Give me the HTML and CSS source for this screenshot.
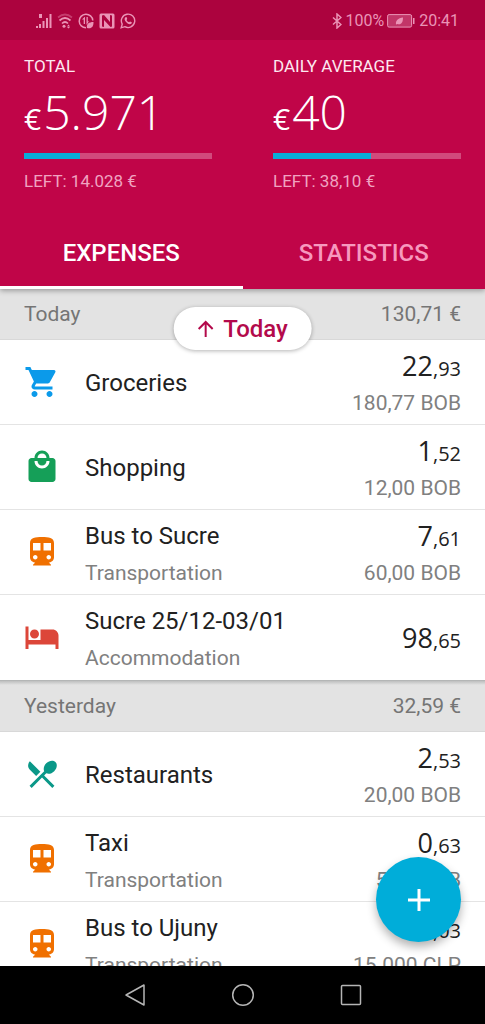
FILE: index.html
```html
<!DOCTYPE html>
<html lang="en">
<head>
<meta charset="utf-8">
<meta name="viewport" content="width=device-width, initial-scale=1">
<title>Expenses</title>
<link rel="stylesheet" href="styles.css">
</head>
<body>
<svg class="sprite" aria-hidden="true">
  <symbol id="cart" viewBox="0 0 24 24"><path d="M7 18c-1.1 0-1.99.9-1.99 2S5.9 22 7 22s2-.9 2-2-.9-2-2-2zM1 2v2h2l3.6 7.59-1.35 2.45c-.16.28-.25.61-.25.96 0 1.1.9 2 2 2h12v-2H7.42c-.14 0-.25-.11-.25-.25l.03-.12.9-1.63h7.45c.75 0 1.41-.41 1.75-1.03l3.58-6.49A1.003 1.003 0 0020 4H5.21l-.94-2H1zm16 16c-1.1 0-1.99.9-1.99 2s.89 2 1.99 2 2-.9 2-2-.9-2-2-2z"/></symbol>
  <symbol id="bag" viewBox="0 0 24 24"><path d="M19 6h-2c0-2.76-2.24-5-5-5S7 3.24 7 6H5c-1.1 0-1.99.9-1.99 2L3 20c0 1.1.9 2 2 2h14c1.1 0 2-.9 2-2V8c0-1.1-.9-2-2-2zm-7-3c1.66 0 3 1.34 3 3H9c0-1.66 1.34-3 3-3zm0 10c-2.76 0-5-2.24-5-5h2c0 1.66 1.34 3 3 3s3-1.34 3-3h2c0 2.76-2.24 5-5 5z"/></symbol>
  <symbol id="train" viewBox="0 0 24 24"><path d="M12 2c-4.42 0-8 .5-8 4v9.5C4 17.43 5.57 19 7.5 19L6 20.5v.5h12v-.5L16.5 19c1.93 0 3.5-1.57 3.5-3.5V6c0-3.5-3.58-4-8-4zM7.5 17c-.83 0-1.5-.67-1.5-1.5S6.67 14 7.5 14s1.5.67 1.5 1.5S8.33 17 7.5 17zm3.5-6H6V6h5v5zm5.500 6c-.83 0-1.5-.67-1.5-1.5s.67-1.5 1.5-1.5 1.5.67 1.5 1.5-.67 1.5-1.5 1.5zm1.5-6h-5V6h5v5z"/></symbol>
  <symbol id="bed" viewBox="0 0 24 24"><path d="M7 13c1.66 0 3-1.34 3-3S8.66 7 7 7s-3 1.34-3 3 1.34 3 3 3zm12-6h-8v7H3V5H1v15h2v-3h18v3h2v-9c0-2.21-1.79-4-4-4z"/></symbol>
  <symbol id="dining" viewBox="0 0 24 24"><path d="M8.1 13.34l2.83-2.83L3.91 3.5c-1.56 1.56-1.56 4.09 0 5.66l4.19 4.18zm6.78-1.81c1.53.71 3.68.21 5.27-1.38 1.91-1.91 2.28-4.65.81-6.12-1.46-1.46-4.2-1.1-6.12.81-1.59 1.59-2.09 3.74-1.38 5.27L3.7 19.87l1.41 1.41L12 14.41l6.88 6.88 1.41-1.41L13.41 13l1.47-1.47z"/></symbol>
</svg>

<header class="app-bar">
  <div class="status">
    <div class="status-icons">
      <svg viewBox="0 0 16 16"><path d="M0 13h2v2H0zM3 11h2v4H3zM6.500 8h2v7h-2zM10 5h2v10h-2zM13.500 1h2v14h-2zM3 1h3v4H3z"/></svg>
      <svg viewBox="0 0 16 16"><g fill="none" stroke="currentColor" stroke-width="1.700"><path d="M1 4.500q7-6 14 0" opacity=".4"/><path d="M2.500 7.500q5.500-5 11 0M5 10.500q3-3 6 0"/></g><circle cx="7" cy="13.300" r="1.500"/><path d="M11.500 11.500l1.500 2h-3zM11.500 15.500l1.500-1.500h-3z"/></svg>
      <svg viewBox="0 0 16 16"><path d="M14.800 7.500A6.800 6.800 0 1 0 8 14.800" fill="none" stroke="currentColor" stroke-width="1.500"/><path d="M4 6.500L6.500 4H7v7H5.700V6.500zM8.500 4h1.300v4.500L11 8l-2 3.500h-.5z"/><path d="M9 15c-1-4 2-6 6.500-6 0 5-2 7-6.500 6z"/></svg>
      <svg viewBox="0 0 16 16"><path fill-rule="evenodd" d="M2 .5h12a1.500 1.500 0 0 1 1.500 1.500v12a1.500 1.500 0 0 1-1.500 1.500H2A1.500 1.500 0 0 1 .5 14V2A1.500 1.500 0 0 1 2 .5zM3 2.500v11l2 .5V7l6.500 7 1.500-.5v-11L11 2v7L5 2z"/></svg>
      <svg viewBox="0 0 16 16"><path d="M1.200 14.800l1-3.700a6.700 6.700 0 1 1 2.600 2.600z" fill="none" stroke="currentColor" stroke-width="1.400"/><path d="M5.500 4.300c.6-.4 1-.2 1.200.2l.5 1.200c0 .5-.4.8-.7 1.200.6 1.100 1.400 1.900 2.600 2.400l.9-.9 1.800.9c.2 1.300-.9 2-2 2C7.500 11 4.600 8.200 4.600 6c0-.8.4-1.400.9-1.700z"/></svg>
    </div>
    <div class="status-info">
      <svg class="bluetooth" viewBox="0 0 10 16"><path d="M1 4.500l8 7-4 3.500V1l4 3.500-8 7" fill="none" stroke="currentColor" stroke-width="1.500"/></svg>
      <span>100%</span>
      <svg class="battery" viewBox="0 0 28 14"><rect x=".6" y=".6" width="24" height="12.500" rx="1.500" fill="currentColor" fill-opacity=".35" stroke="currentColor"/><path d="M26 4h1.500v6H26z"/><path d="M9 10.500c-.5-4 2-6.500 7-7 0 5.500-2 7.500-5.500 6.500z"/></svg>
      <time class="clock">20:41</time>
    </div>
  </div>

  <div class="stats">
    <section class="stat">
      <h2 class="stat-label" id="total">TOTAL</h2>
      <p class="stat-value"><span class="currency">€</span>5.971</p>
      <progress class="bar" value="30" max="100" aria-labelledby="total"></progress>
      <p class="stat-left">LEFT: 14.028 €</p>
    </section>
    <section class="stat">
      <h2 class="stat-label" id="daily">DAILY AVERAGE</h2>
      <p class="stat-value"><span class="currency">€</span>40</p>
      <progress class="bar" value="52" max="100" aria-labelledby="daily"></progress>
      <p class="stat-left">LEFT: 38,10 €</p>
    </section>
  </div>

  <div class="tabs" role="tablist">
    <button class="tab tab-active" role="tab" aria-selected="true">EXPENSES</button>
    <button class="tab" role="tab" aria-selected="false">STATISTICS</button>
  </div>
</header>

<main class="content">
  <div class="list">
    <section class="day">
      <h3 class="day-head"><span>Today</span><span>130,71 €</span></h3>
      <ul class="rows">
        <li class="row">
          <svg class="icon blue"><use href="#cart"/></svg>
          <div class="text single"><span class="title">Groceries</span></div>
          <div class="price"><span class="amount">22<small>,93</small></span><span class="sub">180,77 BOB</span></div>
        </li>
        <li class="row">
          <svg class="icon green"><use href="#bag"/></svg>
          <div class="text single"><span class="title">Shopping</span></div>
          <div class="price"><span class="amount">1<small>,52</small></span><span class="sub">12,00 BOB</span></div>
        </li>
        <li class="row">
          <svg class="icon orange"><use href="#train"/></svg>
          <div class="text"><span class="title">Bus to Sucre</span><span class="sub">Transportation</span></div>
          <div class="price"><span class="amount">7<small>,61</small></span><span class="sub">60,00 BOB</span></div>
        </li>
        <li class="row">
          <svg class="icon red"><use href="#bed"/></svg>
          <div class="text"><span class="title">Sucre 25/12-03/01</span><span class="sub">Accommodation</span></div>
          <div class="price single"><span class="amount">98<small>,65</small></span></div>
        </li>
      </ul>
    </section>
    <section class="day">
      <h3 class="day-head"><span>Yesterday</span><span>32,59 €</span></h3>
      <ul class="rows">
        <li class="row">
          <svg class="icon teal"><use href="#dining"/></svg>
          <div class="text single"><span class="title">Restaurants</span></div>
          <div class="price"><span class="amount">2<small>,53</small></span><span class="sub">20,00 BOB</span></div>
        </li>
        <li class="row">
          <svg class="icon orange"><use href="#train"/></svg>
          <div class="text"><span class="title">Taxi</span><span class="sub">Transportation</span></div>
          <div class="price"><span class="amount">0<small>,63</small></span><span class="sub">5,00 BOB</span></div>
        </li>
        <li class="row">
          <svg class="icon orange"><use href="#train"/></svg>
          <div class="text"><span class="title">Bus to Ujuny</span><span class="sub">Transportation</span></div>
          <div class="price"><span class="amount">19<small>,03</small></span><span class="sub">15.000 CLP</span></div>
        </li>
      </ul>
    </section>
  </div>
  <button class="jump">
    <svg viewBox="0 0 16 18" aria-hidden="true"><path d="M8 17V2M1 9l7-7 7 7"/></svg>
    Today
  </button>
  <button class="add" aria-label="Add expense">
    <svg viewBox="0 0 22 22" aria-hidden="true"><path d="M11 0v22M0 11h22"/></svg>
  </button>
</main>

<nav class="system-nav">
  <button aria-label="Back"><svg viewBox="0 0 24 24"><path d="M21 2v20L3 12z"/></svg></button>
  <button aria-label="Home"><svg viewBox="0 0 24 24"><circle cx="12" cy="12" r="10.300"/></svg></button>
  <button aria-label="Recent apps"><svg viewBox="0 0 24 24"><rect x="2.500" y="2.500" width="19" height="19" rx="1"/></svg></button>
</nav>
</body>
</html>
```

FILE: styles.css
```css
* {
  box-sizing: border-box;
}

body {
  margin: 0;
  height: 100vh;
  display: flex;
  flex-direction: column;
  font-family: Roboto, "Liberation Sans", sans-serif;
  color: #212121;
  background: #fff;
}

h2, h3, p, ul {
  margin: 0;
  padding: 0;
  font-weight: 400;
}

button {
  padding: 0;
  border: 0;
  background: none;
  color: inherit;
  font-family: inherit;
  cursor: pointer;
}

svg {
  display: block;
  fill: currentColor;
}

.sprite {
  position: absolute;
  width: 0;
  height: 0;
}

/* App bar */
.app-bar {
  position: relative;
  z-index: 1;
  flex: none;
  background: #c00548;
  color: #fff;
  box-shadow: 0 2px 5px rgba(0, 0, 0, 0.3);
}

.status {
  display: flex;
  justify-content: space-between;
  align-items: center;
  height: 40px;
  padding: 1px 26px 0 36px;
  background: #ac033e;
  color: #ea94b6;
  font-size: 16px;
}

.status-icons {
  display: flex;
  gap: 5px;
}

.status-icons svg {
  width: 16px;
  height: 16px;
}

.status-info {
  display: flex;
  align-items: center;
  gap: 3px;
}

.bluetooth {
  width: 10px;
  height: 16px;
}

.battery {
  width: 28px;
  height: 14px;
}

.clock {
  padding-left: 1px;
}

.stats {
  display: grid;
  grid-template-columns: 1fr 1fr;
  gap: 61px;
  padding: 14px 24px 24px;
}

.stat-label,
.stat-left {
  font-size: 17px;
  line-height: 24px;
}

.stat-label {
  color: #fde8f0;
}

.stat-left {
  color: #f0a3c1;
}

.stat-value {
  margin: 4px 0 11px;
  font-family: "Open Sans", "Noto Sans", sans-serif;
  font-weight: 300;
  font-size: 48px;
  line-height: 60px;
}

.currency {
  margin-right: 2px;
  font-size: 30px;
  font-weight: 400;
  line-height: 30px;
}

.bar {
  display: block;
  appearance: none;
  width: 100%;
  height: 6px;
  margin-bottom: 10px;
  border: 0;
  background: #d14a7c;
}

.bar::-webkit-progress-bar {
  background: #d14a7c;
}

.bar::-webkit-progress-value {
  background: #0aacd8;
}

.bar::-moz-progress-bar {
  background: #0aacd8;
}

.tabs {
  display: grid;
  grid-template-columns: 1fr 1fr;
}

.tab {
  height: 72px;
  border-top: 3px solid transparent;
  border-bottom: 3px solid transparent;
  color: #f799be;
  font-size: 24px;
  font-weight: 500;
}

.tab-active {
  border-bottom-color: #fff;
  color: #fff;
}

/* Expense list */
.content {
  position: relative;
  flex: 1;
  min-height: 0;
}

.list {
  height: 100%;
  overflow-y: auto;
  scrollbar-width: none;
}

.day + .day {
  border-top: 1px solid #b4b6b6;
}

.day-head {
  display: flex;
  justify-content: space-between;
  align-items: center;
  height: 51px;
  padding: 0 24px;
  border-bottom: 1px solid #d8d8d8;
  background: #e3e3e3;
  color: #757575;
  font-size: 21px;
}

.day + .day .day-head {
  background: linear-gradient(#bebfbf, #e3e3e3 4px);
}

.rows {
  list-style: none;
}

.row {
  display: flex;
  align-items: center;
  height: 85px;
  padding: 0 24px;
  border-bottom: 1px solid #e4e4e4;
}

.row:last-child {
  border-bottom-color: transparent;
}

.icon {
  flex: none;
  width: 36px;
  height: 36px;
  margin-right: 25px;
}

.blue { color: #0b9aea; }
.green { color: #159f58; }
.orange { color: #f07000; }
.red { color: #dc4639; }
.teal { color: #0a9888; }

.text,
.price {
  display: flex;
  flex-direction: column;
  gap: 9px;
  padding-top: 5px;
  line-height: 28px;
  white-space: nowrap;
}

.text {
  flex: 1;
}

.price {
  align-items: flex-end;
}

.single {
  padding-top: 2px;
}

.title {
  font-size: 24px;
}

.sub {
  color: #808080;
  font-size: 21px;
}

.amount {
  font-family: "Open Sans", "Noto Sans", sans-serif;
  font-size: 27px;
}

.amount small {
  font-size: 20px;
  line-height: 20px;
}

/* Floating controls */
.jump {
  position: absolute;
  z-index: 2;
  top: 18px;
  left: 50%;
  transform: translateX(-50%);
  display: flex;
  align-items: center;
  gap: 10px;
  height: 43px;
  padding: 0 24px;
  border-radius: 22px;
  background: #fff;
  color: #b30a4b;
  font-size: 24px;
  font-weight: 500;
  box-shadow: 0 1px 4px rgba(0, 0, 0, 0.3);
}

.jump svg {
  width: 16px;
  height: 18px;
  fill: none;
  stroke: currentColor;
  stroke-width: 2;
}

.add {
  position: absolute;
  right: 24px;
  bottom: 24px;
  display: grid;
  place-items: center;
  width: 85px;
  height: 85px;
  border-radius: 50%;
  background: #00add9;
  color: #fff;
  box-shadow: 0 5px 10px rgba(0, 0, 0, 0.3);
}

.add svg {
  width: 22px;
  height: 22px;
  stroke: currentColor;
  stroke-width: 3;
}

/* System navigation */
.system-nav {
  position: relative;
  flex: none;
  display: flex;
  justify-content: center;
  align-items: center;
  gap: 84px;
  height: 58px;
  background: #000;
  color: #b5b5b5;
}

.system-nav svg {
  width: 24px;
  height: 24px;
  fill: none;
  stroke: currentColor;
  stroke-width: 1.5;
  stroke-linejoin: round;
}
```
